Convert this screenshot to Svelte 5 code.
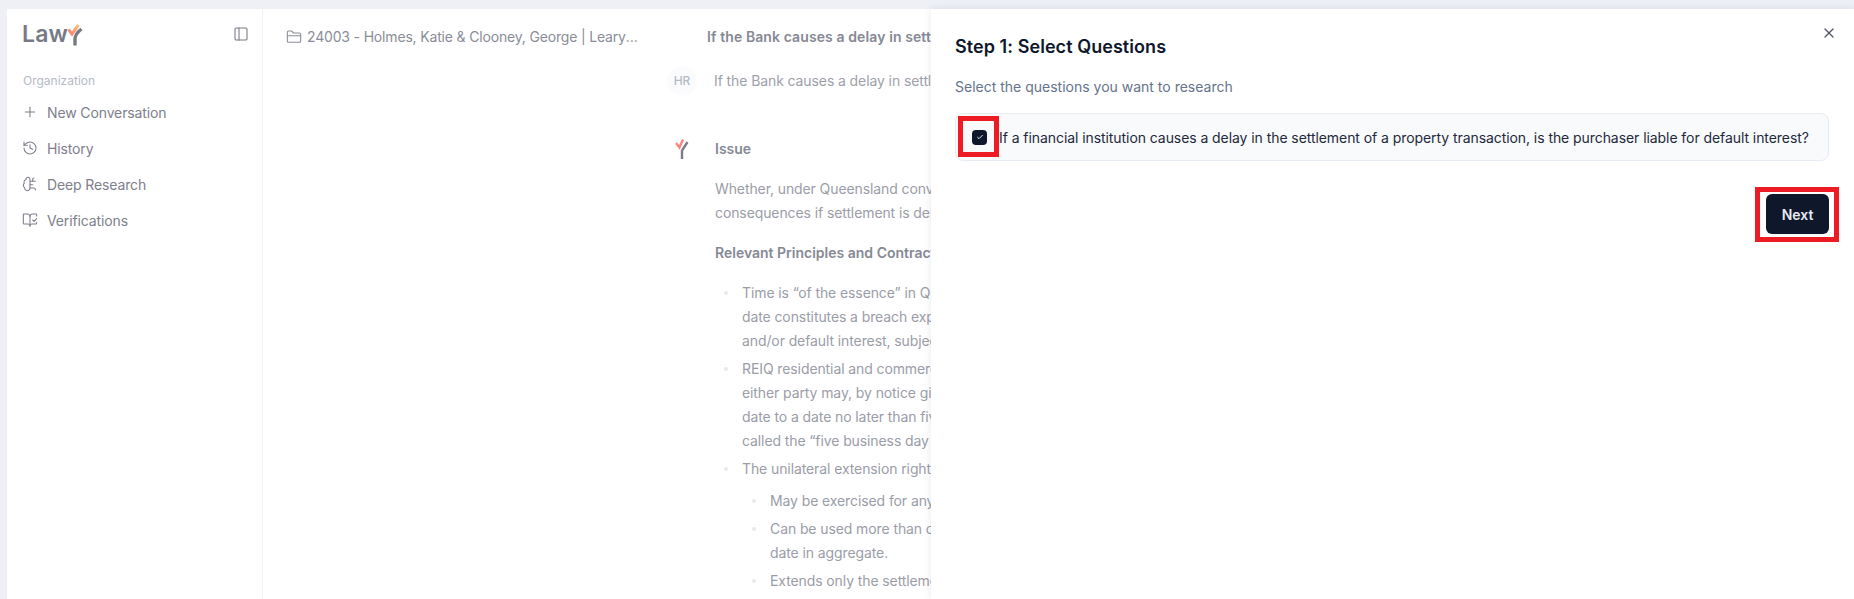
<script lang="ts">
	const nav = [
		{ label: 'New Conversation', paths: ['M5 12h14', 'M12 5v14'] },
		{ label: 'History', paths: ['M3 12a9 9 0 1 0 9-9 9.75 9.75 0 0 0-6.74 2.74L3 8', 'M3 3v5h5', 'M12 7v5l4 2'] },
		{
			label: 'Deep Research',
			paths: [
				'M12 5a3 3 0 1 0-5.997.125 4 4 0 0 0-2.526 5.77 4 4 0 0 0 .556 6.588A4 4 0 1 0 12 18Z',
				'M12 13h4',
				'M12 18h6a2 2 0 0 1 2 2v1',
				'M12 8h8',
				'M16 8V5a2 2 0 0 1 2-2'
			]
		},
		{
			label: 'Verifications',
			paths: [
				'M12 21V7',
				'm16 12 2 2 4-4',
				'M22 6V4a1 1 0 0 0-1-1h-5a4 4 0 0 0-4 4 4 4 0 0 0-4-4H3a1 1 0 0 0-1 1v13a1 1 0 0 0 1 1h6a3 3 0 0 1 3 3 3 3 0 0 1 3-3h6a1 1 0 0 0 1-1v-1.3'
			]
		}
	];
</script>

<div class="shell">
	<aside class="sidebar">
		<div class="sidebar__head">
			<span class="logo">
				<span class="logo__word">Law</span>
				<svg class="logo__mark" viewBox="0 0 16 22" width="16" height="22" aria-hidden="true">
					<path d="M8 21.500V15Q8 10 14.500 5" fill="none" stroke="#777a86" stroke-width="3.400" />
					<path d="M1.500 5.500 5 10 11.500 1" fill="none" stroke="url(#logo-grad)" stroke-width="3" />
					<defs>
						<linearGradient id="logo-grad" x1="0" y1="1" x2="1" y2="0">
							<stop offset="0" stop-color="#f77f6e" />
							<stop offset="1" stop-color="#f8c27a" />
						</linearGradient>
					</defs>
				</svg>
			</span>
			<svg class="icon icon--toggle" viewBox="0 0 24 24" aria-hidden="true">
				<rect x="3" y="3" width="18" height="18" rx="2" />
				<path d="M9 3v18" />
			</svg>
		</div>
		<p class="sidebar__label">Organization</p>
		<nav class="nav">
			{#each nav as item}
				<div class="nav__item">
					<svg class="icon" viewBox="0 0 24 24" aria-hidden="true">
						{#each item.paths as d}<path {d} />{/each}
					</svg>
					<span>{item.label}</span>
				</div>
			{/each}
		</nav>
	</aside>

	<main class="main">
		<header class="topbar">
			<div class="crumb">
				<svg class="icon icon--folder" viewBox="0 0 24 24" aria-hidden="true">
					<path d="M20 20a2 2 0 0 0 2-2V8a2 2 0 0 0-2-2h-7.9a2 2 0 0 1-1.69-.9L9.6 3.9A2 2 0 0 0 7.93 3H4a2 2 0 0 0-2 2v13a2 2 0 0 0 2 2Z" />
					<path d="M2 10h20" />
				</svg>
				<span class="crumb__text">24003 - Holmes, Katie &amp; Clooney, George | Leary &amp; Partners</span>
			</div>
			<h1 class="topbar__title">If the Bank causes a delay in settlement</h1>
		</header>

		<section class="chat">
			<div class="msg msg--user">
				<span class="avatar">HR</span>
				<p>If the Bank causes a delay in settlement</p>
			</div>

			<div class="msg msg--answer">
				<svg class="answer-mark" viewBox="0 0 14 20" width="14" height="20" aria-hidden="true">
					<path d="M7 20V11.500L12.500 3" fill="none" stroke="#7b7e8a" stroke-width="2.400" />
					<path d="M1 4 4.500 8.500 8 0.500" fill="none" stroke="#f8877a" stroke-width="2.400" />
				</svg>
				<div class="answer">
					<p class="answer__head">Issue</p>
					<p>Whether, under Queensland conveyancing<br />consequences if settlement is delayed</p>
					<p class="answer__head">Relevant Principles and Contract Terms</p>
					<ul>
						<li>Time is “of the essence” in Queensland<br />date constitutes a breach exposing<br />and/or default interest, subject to</li>
						<li>REIQ residential and commercial<br />either party may, by notice given<br />date to a date no later than five<br />called the “five business day rule”</li>
						<li>
							The unilateral extension right
							<ul>
								<li>May be exercised for any reason</li>
								<li>Can be used more than once<br />date in aggregate.</li>
								<li>Extends only the settlement</li>
							</ul>
						</li>
					</ul>
				</div>
			</div>
		</section>
	</main>

	<div class="drawer">
		<svg class="icon drawer__close" viewBox="0 0 24 24" aria-hidden="true">
			<path d="M18 6 6 18" />
			<path d="m6 6 12 12" />
		</svg>
		<h2 class="drawer__title">Step 1: Select Questions</h2>
		<p class="drawer__sub">Select the questions you want to research</p>
		<div class="question">
			<span class="check">
				<svg viewBox="0 0 24 24" width="8" height="8" aria-hidden="true">
					<path d="M20 6 9 17l-5-5" fill="none" stroke="#e8eaf0" stroke-width="3" />
				</svg>
			</span>
			<span>If a financial institution causes a delay in the settlement of a property transaction, is the purchaser liable for default interest?</span>
			<span class="mark mark--check"></span>
		</div>
		<div class="drawer__actions">
			<button class="next">
				Next
				<span class="mark mark--next"></span>
			</button>
		</div>
	</div>
</div>

<style>
	:global(body) {
		margin: 0;
		background: #eef0f6;
		font-family: Inter, 'Liberation Sans', sans-serif;
	}

	.shell {
		display: flex;
		height: 100vh;
		box-sizing: border-box;
		padding: 9px 0 0 7px;
		overflow: hidden;
	}

	.icon {
		flex: none;
		width: 16px;
		height: 16px;
		fill: none;
		stroke: currentColor;
		stroke-width: 1.6;
		stroke-linecap: round;
		stroke-linejoin: round;
	}

	/* Sidebar */
	.sidebar {
		flex: none;
		width: 256px;
		box-sizing: border-box;
		background: #fff;
		border-right: 1px solid #f0f1f6;
		color: #7d808c;
		font-size: 14px;
		letter-spacing: -0.13px;
	}

	.sidebar__head {
		display: flex;
		align-items: center;
		justify-content: space-between;
		height: 50px;
		padding: 0 13px 0 15px;
	}

	.logo {
		display: flex;
		align-items: flex-end;
	}

	.logo__word {
		font-size: 23px;
		font-weight: 600;
		letter-spacing: 0.2px;
		line-height: 26px;
		color: #777a86;
	}

	.logo__mark {
		margin: 0 0 1px -1px;
	}

	.icon--toggle {
		color: #777a86;
		margin-bottom: 1px;
	}

	.sidebar__label {
		margin: 13px 0 0;
		padding-left: 16px;
		font-size: 12px;
		line-height: 18px;
		color: #b5bac6;
		letter-spacing: 0;
	}

	.nav {
		display: flex;
		flex-direction: column;
		margin-top: 4px;
	}

	.nav__item {
		display: flex;
		align-items: center;
		gap: 9px;
		height: 36px;
		padding-left: 15px;
	}

	/* Conversation behind the drawer */
	.main {
		flex: none;
		width: 668px;
		overflow: hidden;
		background: #fff;
		color: #8a8d98;
		font-size: 14px;
		line-height: 24px;
		letter-spacing: -0.1px;
	}

	.topbar {
		display: flex;
		align-items: center;
		height: 55px;
		padding-left: 23px;
	}

	.crumb {
		display: flex;
		align-items: center;
		gap: 5px;
		width: 421px;
		flex: none;
	}

	.crumb__text {
		width: 331px;
		overflow: hidden;
		white-space: nowrap;
		text-overflow: ellipsis;
		letter-spacing: -0.17px;
	}

	.topbar__title {
		margin: 0;
		font-size: 14px;
		font-weight: 600;
		letter-spacing: 0.1px;
		white-space: nowrap;
		color: #868994;
	}

	.chat {
		padding: 2px 0 0 404px;
		white-space: nowrap;
	}

	.msg {
		display: flex;
	}

	.msg p {
		margin: 0;
	}

	.msg--user {
		align-items: center;
		gap: 17px;
		color: #9ea1ab;
	}

	.avatar {
		display: flex;
		align-items: center;
		justify-content: center;
		flex: none;
		width: 30px;
		height: 30px;
		border-radius: 50%;
		background: #fbfbfd;
		color: #b4bac8;
		font-size: 12px;
		font-weight: 500;
	}

	.msg--answer {
		margin-top: 41px;
		gap: 26px;
	}

	.answer-mark {
		flex: none;
		margin: 2px 0 0 8px;
	}

	.answer p {
		margin: 0 0 16px;
		color: #9a9da7;
	}

	.answer .answer__head {
		font-weight: 600;
		letter-spacing: 0;
		color: #868994;
	}

	.answer ul {
		margin: 0;
		padding: 0 0 0 27px;
		list-style: none;
		color: #9a9da7;
	}

	.answer li {
		position: relative;
		margin-bottom: 4px;
	}

	.answer li::before {
		content: '';
		position: absolute;
		left: -18px;
		top: 10px;
		width: 4px;
		height: 4px;
		border-radius: 50%;
		background: #e8e9ee;
	}

	.answer li ul {
		margin-top: 8px;
		padding-left: 28px;
	}

	/* Drawer */
	.drawer {
		position: relative;
		flex: 1;
		min-width: 0;
		box-sizing: border-box;
		padding: 24px 25px 0 24px;
		background: #fff;
		box-shadow: 0 0 8px rgba(30, 40, 70, 0.1);
		color: #1e293b;
		font-size: 14px;
		letter-spacing: -0.07px;
	}

	.drawer__close {
		position: absolute;
		top: 16px;
		right: 17px;
		color: #505565;
		stroke-width: 1.9;
	}

	.drawer__title {
		margin: 0;
		font-size: 18px;
		font-weight: 600;
		letter-spacing: 0.06px;
		line-height: 28px;
		color: #0f172a;
	}

	.drawer__sub {
		margin: 16px 0;
		line-height: 20px;
		color: #64748b;
		letter-spacing: 0;
	}

	.question {
		position: relative;
		display: flex;
		align-items: center;
		gap: 12px;
		box-sizing: border-box;
		height: 48px;
		padding-left: 16px;
		background: #f8fafc;
		border: 1px solid #e7ebf2;
		border-radius: 8px;
		white-space: nowrap;
	}

	.check {
		display: flex;
		align-items: center;
		justify-content: center;
		flex: none;
		width: 15px;
		height: 15px;
		border-radius: 4px;
		background: #0f172a;
	}

	.drawer__actions {
		display: flex;
		justify-content: flex-end;
		margin-top: 33px;
	}

	.next {
		position: relative;
		width: 63px;
		height: 40px;
		border: 0;
		border-radius: 6px;
		background: #0f172a;
		color: #e6e9ef;
		font: 600 14px Inter, 'Liberation Sans', sans-serif;
	}

	/* Red review annotations */
	.mark {
		position: absolute;
		box-sizing: border-box;
		border: 5px solid #ed1c24;
		pointer-events: none;
	}

	.mark--check {
		left: 2px;
		top: 2px;
		width: 41px;
		height: 41px;
	}

	.mark--next {
		left: -11px;
		top: -7px;
		width: 84px;
		height: 55px;
	}
</style>
